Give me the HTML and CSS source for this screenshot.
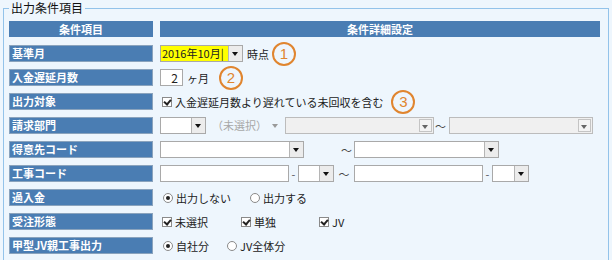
FILE: index.html
```html
<!DOCTYPE html>
<html lang="ja">
<head>
    <meta charset="UTF-8">
    <title>出力条件項目</title>
    <link rel="stylesheet" href="styles.css">
</head>
<body>
    <fieldset class="panel">
        <legend>出力条件項目</legend>
        <div class="grid">
            <div class="head">条件項目</div>
            <div class="head">条件詳細設定</div>

            <div class="label">基準月</div>
            <div class="cell">
                <div class="combo w83 yellow"><span class="txt">2016年10月|</span><span class="drop"></span></div>
                <span class="unit">時点</span>
                <span class="mark m1">1</span>
            </div>

            <div class="label">入金遅延月数</div>
            <div class="cell">
                <div class="num">2</div>
                <span class="unit">ヶ月</span>
                <span class="mark m2">2</span>
            </div>

            <div class="label">出力対象</div>
            <div class="cell">
                <span class="check on"></span>
                <span class="opt">入金遅延月数より遅れている未回収を含む</span>
                <span class="mark m3">3</span>
            </div>

            <div class="label">請求部門</div>
            <div class="cell">
                <div class="combo w46"><span class="txt"></span><span class="drop"></span></div>
                <div class="combo flat w74"><span class="txt">（未選択）</span><span class="drop"></span></div>
                <div class="combo off w149"><span class="txt"></span><span class="drop"></span></div>
                <span class="tilde">～</span>
                <div class="combo off w144"><span class="txt"></span><span class="drop"></span></div>
            </div>

            <div class="label">得意先コード</div>
            <div class="cell">
                <div class="combo w144"><span class="txt"></span><span class="drop"></span></div>
                <span class="tilde far">～</span>
                <div class="combo w145"><span class="txt"></span><span class="drop"></span></div>
            </div>

            <div class="label">工事コード</div>
            <div class="cell">
                <div class="box w129"></div>
                <span class="dash">-</span>
                <div class="combo w36"><span class="txt"></span><span class="drop"></span></div>
                <span class="tilde mid">～</span>
                <div class="box w129"></div>
                <span class="dash">-</span>
                <div class="combo w37"><span class="txt"></span><span class="drop"></span></div>
            </div>

            <div class="label">過入金</div>
            <div class="cell">
                <span class="radio on"></span><span class="opt g1">出力しない</span>
                <span class="radio"></span><span class="opt">出力する</span>
            </div>

            <div class="label">受注形態</div>
            <div class="cell">
                <span class="check on"></span><span class="opt g2">未選択</span>
                <span class="check on"></span><span class="opt g3">単独</span>
                <span class="check on"></span><span class="opt">JV</span>
            </div>

            <div class="label">甲型JV親工事出力</div>
            <div class="cell">
                <span class="radio on"></span><span class="opt g4">自社分</span>
                <span class="radio"></span><span class="opt">JV全体分</span>
            </div>
        </div>
    </fieldset>
</body>
</html>
```

FILE: styles.css
```css
body {
    margin: 0;
    background-color: #eef6fd;
    font-family: "Noto Sans CJK JP", "Liberation Sans", sans-serif;
    color: #222;
    font-size: 11px;
}
.panel {
    margin: 0 3px 0 3px;
    padding: 5px 0 10px 5px;
    border: 1px solid #93c3ea;
    min-width: 0;
}
.panel legend {
    font-size: 12px;
    line-height: 16px;
    padding: 0 2px;
    margin-left: 0;
    color: #111;
}
.grid {
    display: grid;
    grid-template-columns: 144px 440px;
    column-gap: 7px;
    row-gap: 7px;
    grid-auto-rows: 17px;
}
.head {
    background-color: #4a7db3;
    color: #fff;
    font-weight: bold;
    text-align: center;
    line-height: 16px;
    height: 16px;
}
.label {
    background-color: #4a7db3;
    border: 1px solid #8aa3bd;
    color: #fff;
    font-weight: bold;
    line-height: 15px;
    padding-left: 2px;
    box-sizing: border-box;
}
.cell {
    display: flex;
    align-items: center;
    height: 17px;
}
.combo, .box, .num {
    display: flex;
    height: 17px;
    box-sizing: border-box;
    border: 1px solid #a9a9a9;
    background-color: #fff;
    flex: none;
}
.combo .txt {
    flex: 1;
    line-height: 15px;
    padding-left: 1px;
    white-space: nowrap;
    overflow: hidden;
}
.combo .drop {
    width: 13px;
    background-color: #ececec;
    border-left: 1px solid #b5b5b5;
    position: relative;
}
.combo .drop::after {
    content: "";
    position: absolute;
    left: 3px;
    top: 6px;
    border-left: 3px solid transparent;
    border-right: 3px solid transparent;
    border-top: 4px solid #111;
}
.combo.yellow .txt {
    background-color: #ffff00;
}
.combo.flat {
    border-color: transparent;
    background-color: transparent;
    margin-left: 3px;
}
.combo.flat .txt {
    color: #a8a8a8;
    padding-left: 2px;
}
.combo.flat .drop {
    background-color: transparent;
    border-left: none;
}
.combo.flat .drop::after {
    border-top-color: #9a9a9a;
}
.combo.off {
    background-color: #f0f0f0;
    border-color: #bcbcbc;
    margin-left: 2px;
}
.combo.off .drop {
    background-color: #f4f4f4;
    border: 1px solid #c4c4c4;
    margin: 1px 1px 1px 0;
    width: 11px;
}
.combo.off .drop::after {
    left: 2px;
    top: 5px;
    border-top-color: #666;
}
.w36 { width: 36px; }
.w37 { width: 37px; }
.w46 { width: 46px; }
.w74 { width: 74px; }
.w83 { width: 83px; }
.w129 { width: 129px; }
.w144 { width: 144px; }
.w145 { width: 145px; }
.w149 { width: 149px; }
.num {
    width: 23px;
    justify-content: flex-end;
    padding-right: 4px;
    line-height: 15px;
    font-size: 12px;
}
.unit {
    margin-left: 4px;
}
.tilde {
    width: 13px;
    text-align: center;
    color: #444;
}
.tilde.far {
    margin-left: 36px;
    margin-right: 1px;
    width: 13px;
}
.tilde.mid {
    width: 20px;
}
.dash {
    width: 9px;
    text-align: center;
    color: #555;
}
.mark {
    width: 20px;
    height: 20px;
    border: 2px solid #e0852f;
    border-radius: 50%;
    color: #e0852f;
    font-size: 15px;
    line-height: 20px;
    text-align: center;
    font-family: "Liberation Sans", sans-serif;
    flex: none;
}
.m1 { margin-left: 3px; }
.m2 { margin-left: 10px; }
.m3 { margin-left: 8px; }
.check, .radio {
    width: 10px;
    height: 10px;
    box-sizing: border-box;
    border: 1px solid #8a8a8a;
    background-color: #fff;
    flex: none;
    position: relative;
    margin: 0 3px 0 2px;
}
.check.on::after {
    content: "";
    position: absolute;
    left: 2px;
    top: 0px;
    width: 3px;
    height: 5px;
    border-right: 2px solid #222;
    border-bottom: 2px solid #222;
    transform: rotate(40deg);
}
.radio {
    border-radius: 50%;
    margin-left: 3px;
}
.radio.on::after {
    content: "";
    position: absolute;
    left: 2px;
    top: 2px;
    width: 4px;
    height: 4px;
    border-radius: 50%;
    background-color: #222;
}
.g1 { margin-right: 16px; }
.g2 { margin-right: 31px; }
.g3 { margin-right: 41px; }
.g4 { margin-right: 15px; }
```
